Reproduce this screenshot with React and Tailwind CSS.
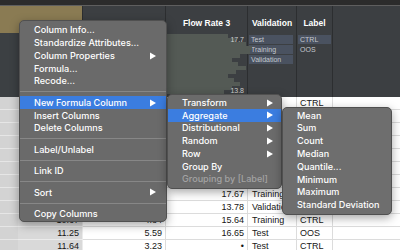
import React from "react";

const rows = [
  { c1: "", c2: "", c3: "", c4: "Test", c5: "CTRL" },
  { c1: "", c2: "", c3: "", c4: "", c5: "" },
  { c1: "", c2: "", c3: "", c4: "", c5: "" },
  { c1: "", c2: "", c3: "", c4: "", c5: "" },
  { c1: "", c2: "", c3: "", c4: "", c5: "" },
  { c1: "", c2: "", c3: "", c4: "", c5: "" },
  { c1: "", c2: "", c3: "", c4: "", c5: "" },
  { c1: "", c2: "", c3: "17.67", c4: "Training", c5: "" },
  { c1: "", c2: "", c3: "13.78", c4: "Validation", c5: "" },
  { c1: "10.67", c2: "4.84", c3: "15.64", c4: "Training", c5: "CTRL" },
  { c1: "11.25", c2: "5.59", c3: "16.65", c4: "Test", c5: "OOS" },
  { c1: "11.64", c2: "3.23", c3: "•", c4: "Test", c5: "CTRL" },
];

const bars = [62, 70, 80, 86, 84, 74, 66, 72, 80, 70, 62, 68, 74, 66, 58];

function Arrow() {
  return (
    <svg width="6" height="8" viewBox="0 0 6 8" className="shrink-0">
      <polygon points="0,0.5 6,4 0,7.5" fill="#ffffff" />
    </svg>
  );
}

function Item({ label, arrow, active, disabled, pl = "pl-[14px]", pr = "pr-[10px]", h = "h-[12.8px]" }) {
  return (
    <div
      className={`${h} ${pl} ${pr} flex items-center justify-between whitespace-nowrap ${
        active ? "bg-[#3b7de0]" : ""
      } ${disabled ? "text-[#a3a3a3]" : "text-white"}`}
    >
      <span>{label}</span>
      {arrow ? <Arrow /> : null}
    </div>
  );
}

function Sep() {
  return (
    <div className="h-[8.6px] flex items-center">
      <div className="h-px w-full bg-[#878787]" />
    </div>
  );
}

export default function App() {
  return (
    <div className="relative w-[400px] h-[250px] overflow-hidden bg-white font-['Liberation_Sans',sans-serif]">
      {/* top strip */}
      <div className="h-[5px] bg-[#2c2c2c]" />
      <div className="h-px bg-[#5f5f5f]" />

      {/* header */}
      <div className="h-[91px] grid grid-cols-[18px_65px_83px_82px_49px_36px_1fr] grid-rows-[27px_64px] bg-[#3c3f42]">
        <div className="col-span-2 bg-[#8a7b53] border-r border-[#2c2e30]" />
        <div className="border-r border-[#2c2e30]" />
        <div className="border-r border-[#2c2e30] flex items-end justify-center pb-[3px] text-[8.5px] font-bold text-white">
          Flow Rate 3
        </div>
        <div className="border-r border-[#2c2e30] flex items-end justify-center pb-[3px] text-[8.5px] font-bold text-white">
          Validation
        </div>
        <div className="border-r border-[#2c2e30] flex items-end justify-center pb-[3px] text-[8.5px] font-bold text-white">
          Label
        </div>
        <div />

        {/* distribution row */}
        <div className="bg-[#3c4043]" />
        <div className="border-r border-[#2c2e30]" />
        <div className="border-r border-[#2c2e30]" />
        <div className="relative border-r border-[#2c2e30] pt-[1px]">
          {bars.map((w, i) => (
            <div key={i} className="h-[4px] bg-[#545a55]" style={{ width: `${w}px` }} />
          ))}
          <div className="absolute right-[3px] top-[2px] text-[7px] text-[#d0d0d0]">17.7</div>
          <div className="absolute right-[3px] bottom-[1px] text-[7px] text-[#d0d0d0]">13.8</div>
        </div>
        <div className="border-r border-[#2c2e30] pt-[2px] pl-px pr-[3px] flex flex-col gap-px text-[7px] text-[#c4c9cf]">
          <div className="h-[9px] bg-[#4a5260] pl-[2px] leading-[9px]">Test</div>
          <div className="h-[9px] bg-[#4a5260] pl-[2px] leading-[9px]">Training</div>
          <div className="h-[9px] bg-[#4a5260] pl-[2px] leading-[9px]">Validation</div>
        </div>
        <div className="border-r border-[#2c2e30] pt-[2px] pl-px pr-[1px] flex flex-col gap-px text-[7px] text-[#c4c9cf]">
          <div className="h-[9px] bg-[#4a5260] pl-[2px] leading-[9px]">CTRL</div>
          <div className="h-[9px] pl-[2px] leading-[9px]">OOS</div>
        </div>
        <div />
      </div>

      {/* data rows */}
      <div className="text-[9px] text-[#161616]">
        {rows.map((r, i) => (
          <div key={i} className="h-[13px] grid grid-cols-[18px_65px_83px_82px_49px_36px_1fr] leading-[12px]">
            <div className="bg-[#d3d3d3] border-b border-[#e6e6e6]" />
            <div className="bg-[#d9d9d9] border-b border-r border-[#ebebeb] text-right pr-[3px]">{r.c1}</div>
            <div className="border-b border-r border-[#dcdcdc] text-right pr-[3px]">{r.c2}</div>
            <div className="border-b border-r border-[#dcdcdc] text-right pr-[3px]">{r.c3}</div>
            <div className="border-b border-r border-[#dcdcdc] pl-[4px] whitespace-nowrap overflow-hidden">{r.c4}</div>
            <div className="border-b border-r border-[#dcdcdc] pl-[3px]">{r.c5}</div>
            <div className="border-b border-[#dcdcdc]" />
          </div>
        ))}
      </div>

      {/* menus */}
      <div className="font-['Inter',sans-serif] text-[9.1px] font-medium">
        <div className="absolute left-[19px] top-[20px] w-[148px] h-[202px] rounded-[5px] bg-[#6a6a6a] border border-[#505050] shadow-[0_3px_10px_rgba(0,0,0,0.35)] pt-[2.6px] overflow-hidden">
          <Item label="Column Info..." />
          <Item label="Standardize Attributes..." />
          <Item label="Column Properties" arrow />
          <Item label="Formula..." />
          <Item label="Recode..." />
          <Sep />
          <Item label="New Formula Column" arrow active />
          <Item label="Insert Columns" />
          <Item label="Delete Columns" />
          <Sep />
          <Item label="Label/Unlabel" />
          <Sep />
          <Item label="Link ID" />
          <Sep />
          <Item label="Sort" arrow />
          <Sep />
          <Item label="Copy Columns" />
        </div>

        <div className="absolute left-[167px] top-[94px] w-[115px] h-[95px] rounded-[5px] bg-[#6b6b6b] border border-[#505050] shadow-[0_3px_10px_rgba(0,0,0,0.35)] pt-[1.3px] overflow-hidden">
          <Item label="Transform" arrow pl="pl-[14px]" pr="pr-[8px]" h="h-[12.75px]" />
          <Item label="Aggregate" arrow active pl="pl-[14px]" pr="pr-[8px]" h="h-[12.75px]" />
          <Item label="Distributional" arrow pl="pl-[14px]" pr="pr-[8px]" h="h-[12.75px]" />
          <Item label="Random" arrow pl="pl-[14px]" pr="pr-[8px]" h="h-[12.75px]" />
          <Item label="Row" arrow pl="pl-[14px]" pr="pr-[8px]" h="h-[12.75px]" />
          <Item label="Group By" pl="pl-[14px]" pr="pr-[8px]" h="h-[12.75px]" />
          <Item label="Grouping by [Label]" disabled pl="pl-[14px]" pr="pr-[8px]" h="h-[12.75px]" />
        </div>

        <div className="absolute left-[282px] top-[107px] w-[110px] h-[108px] rounded-[5px] bg-[#6e6e6e] border border-[#505050] shadow-[0_3px_10px_rgba(0,0,0,0.35)] pt-[1px] overflow-hidden">
          {["Mean", "Sum", "Count", "Median", "Quantile...", "Minimum", "Maximum", "Standard Deviation"].map((l) => (
            <Item key={l} label={l} pl="pl-[14px]" pr="pr-[8px]" h="h-[12.8px]" />
          ))}
        </div>
      </div>
    </div>
  );
}
